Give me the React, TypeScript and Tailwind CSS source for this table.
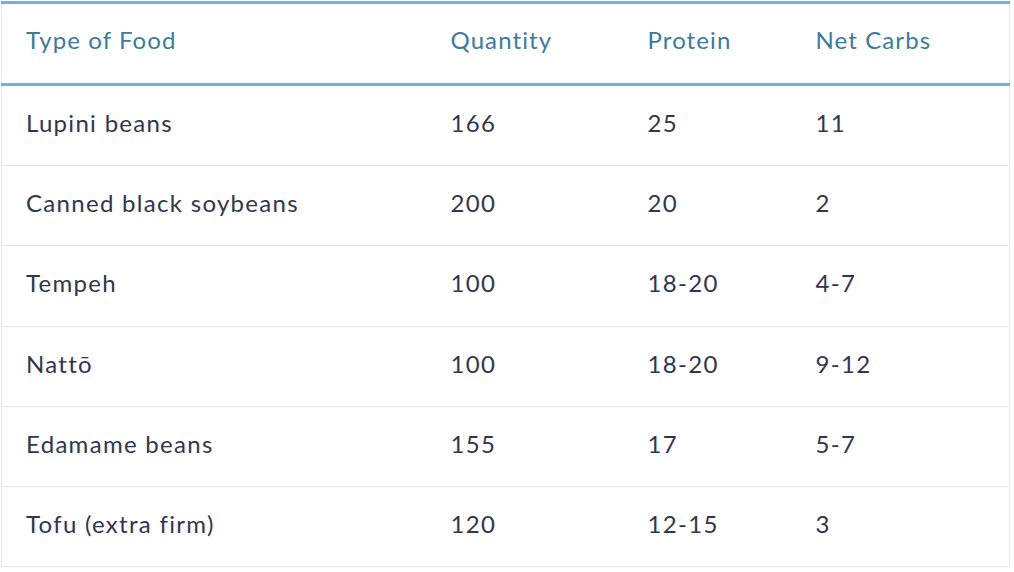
import React from "react";

const rows = [
  ["Lupini beans", "166", "25", "11"],
  ["Canned black soybeans", "200", "20", "2"],
  ["Tempeh", "100", "18-20", "4-7"],
  ["Nattō", "100", "18-20", "9-12"],
  ["Edamame beans", "155", "17", "5-7"],
  ["Tofu (extra firm)", "120", "12-15", "3"],
];

export default function App() {
  return (
    <div className="bg-white w-[1014px] h-[572px] pt-[1px] pl-[1px]" style={{ fontFamily: "Lato, 'Noto Sans', sans-serif" }}>
      <table className="w-[1009px] border-collapse table-fixed border-l border-r border-[#e6e6e6]">
        <colgroup>
          <col className="w-[425px]" />
          <col className="w-[197px]" />
          <col className="w-[168px]" />
          <col />
        </colgroup>
        <thead>
          <tr className="h-[82px] border-t-[3px] border-b-[3px] border-[#6cb4e0]">
            {["Type of Food", "Quantity", "Protein", "Net Carbs"].map((h) => (
              <th key={h} className="text-left font-normal text-[24px] text-[#3b7b9c] pl-[24px] pb-[8px] tracking-[1.1px]">
                {h}
              </th>
            ))}
          </tr>
        </thead>
        <tbody>
          {rows.map((r, i) => (
            <tr key={i} className={(i === 0 ? "h-[81px]" : "h-[80.25px]") + " border-b border-[#e6e6e6]"}>
              {r.map((c, j) => (
                <td key={j} className="text-[24px] text-[#30364f] pl-[24px] pb-[5px] tracking-[1.3px]">
                  {c}
                </td>
              ))}
            </tr>
          ))}
        </tbody>
      </table>
    </div>
  );
}
